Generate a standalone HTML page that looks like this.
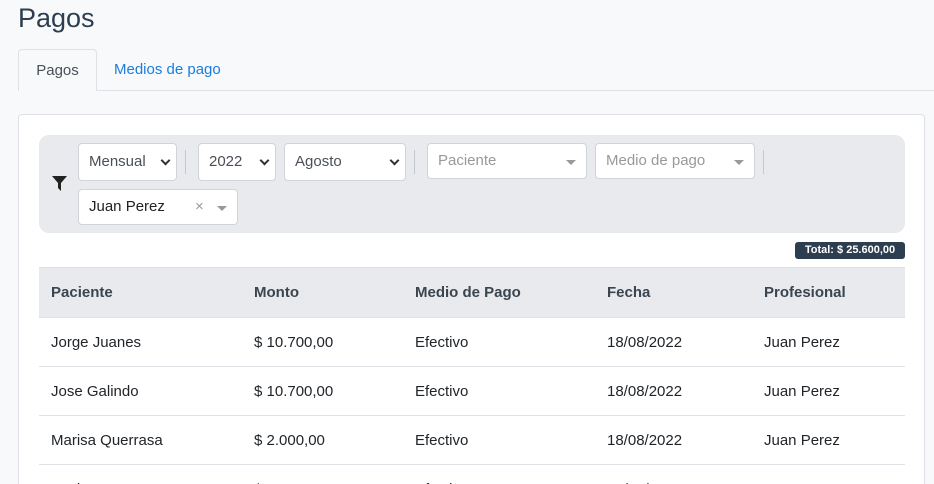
<!DOCTYPE html>
<html style="width:934px;height:484px;overflow:hidden"><head><style>
*{box-sizing:border-box;margin:0;padding:0}
body{width:934px;height:484px;overflow:hidden;background:#f8f9fb;font-family:"Liberation Sans",sans-serif;color:#212529;position:relative}
.a{position:absolute}
h1{position:absolute;left:18px;top:3px;font-size:27px;font-weight:400;color:#2c3e50}
.tabline{left:18px;right:0;top:90px;height:1px;background:#dee2e6}
.tab{left:18px;top:49px;width:79px;height:42px;border:1px solid #dee2e6;border-bottom:none;border-radius:4px 4px 0 0;background:#f8f9fb;font-size:15px;text-align:center;line-height:41px;color:#495057}
.tab2{left:114px;top:49px;line-height:42px;font-size:15px;color:#1a7de0}
.card{left:18px;top:114px;width:907px;height:370px;background:#fff;border:1px solid #dee2e6;border-bottom:none;border-radius:4px 4px 0 0}
.panel{left:39px;top:135px;width:866px;height:98px;background:#e9eaed;border-radius:10px}
.sel{position:absolute;background:#fff;border:1px solid #ced4da;border-radius:4px;font-size:15px;padding-left:10px;color:#495057;line-height:36px}
.ph{color:#999}
.sep{position:absolute;width:1px;height:24px;background:#c5c8cc;top:150px}
.chev{position:absolute;right:7px;top:13px;width:7px;height:7px;border-right:2px solid #333;border-bottom:2px solid #333;transform:rotate(45deg)}
.tri{position:absolute;right:10px;top:16px;border-left:5px solid transparent;border-right:5px solid transparent;border-top:5px solid #999}
.badge{left:795px;top:242px;width:110px;height:17px;background:#2c3e50;color:#fff;font-size:11px;font-weight:700;border-radius:3px;text-align:center;line-height:17px}
table{position:absolute;left:39px;top:267px;width:866px;border-collapse:collapse;font-size:15px}
th{background:#e9eaed;height:50px;text-align:left;font-weight:700;color:#3a4550;padding-left:12px;border-top:1px solid #dee2e6}
td{height:49px;padding-left:12px;border-top:1px solid #dee2e6}
</style></head><body>
<h1>Pagos</h1>
<div class="a tabline"></div>
<div class="a tab">Pagos</div>
<div class="a tab2">Medios de pago</div>
<div class="a card"></div>
<div class="a panel"></div>
<svg class="a" style="left:52px;top:176px" width="15" height="15" viewBox="0 0 15 15"><path d="M0 0H15L9 7V15L6 12V7Z" fill="#222"/></svg>
<div class="sel" style="left:78px;top:143px;width:99px;height:38px">Mensual<span class="chev"></span></div>
<div class="sep" style="left:185px"></div>
<div class="sel" style="left:198px;top:143px;width:78px;height:38px">2022<span class="chev"></span></div>
<div class="sel" style="left:284px;top:143px;width:122px;height:38px">Agosto<span class="chev"></span></div>
<div class="sep" style="left:414px"></div>
<div class="sel ph" style="left:427px;top:143px;width:160px;height:36px;line-height:34px">Paciente<span class="tri"></span></div>
<div class="sel ph" style="left:595px;top:143px;width:160px;height:36px;line-height:34px">Medio de pago<span class="tri"></span></div>
<div class="sep" style="left:763px"></div>
<div class="sel" style="left:78px;top:189px;width:160px;height:36px;line-height:34px;color:#222">Juan Perez<span style="position:absolute;left:116px;color:#999;font-size:15px">×</span><span class="tri"></span></div>
<div class="a badge">Total: $ 25.600,00</div>
<table>
<tr><th style="width:203px">Paciente</th><th style="width:161px">Monto</th><th style="width:192px">Medio de Pago</th><th style="width:157px">Fecha</th><th>Profesional</th></tr>
<tr><td>Jorge Juanes</td><td>$ 10.700,00</td><td>Efectivo</td><td>18/08/2022</td><td>Juan Perez</td></tr>
<tr><td>Jose Galindo</td><td>$ 10.700,00</td><td>Efectivo</td><td>18/08/2022</td><td>Juan Perez</td></tr>
<tr><td>Marisa Querrasa</td><td>$ 2.000,00</td><td>Efectivo</td><td>18/08/2022</td><td>Juan Perez</td></tr>
<tr><td>Mariana Gomez</td><td>$ 700,00</td><td>Efectivo</td><td>18/08/2022</td><td>Juan Perez</td></tr>
</table>
</body></html>
